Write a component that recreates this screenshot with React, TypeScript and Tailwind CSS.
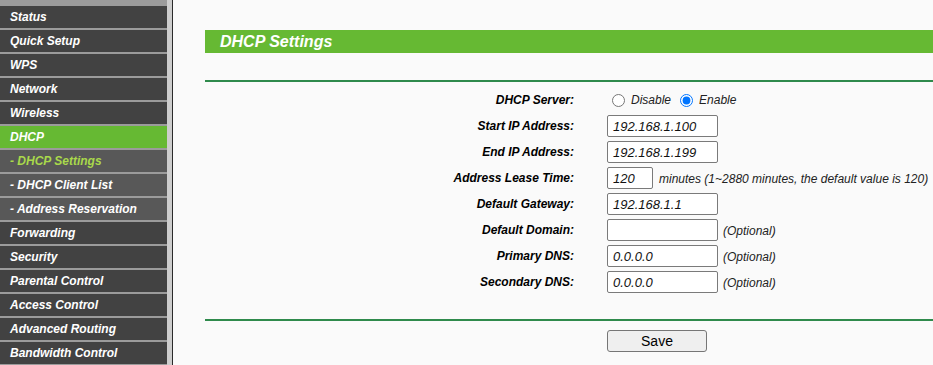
import React from "react"

const menu = [
  { label: "Status" },
  { label: "Quick Setup" },
  { label: "WPS" },
  { label: "Network" },
  { label: "Wireless" },
  { label: "DHCP", active: true },
  { label: "- DHCP Settings", sub: true, current: true },
  { label: "- DHCP Client List", sub: true },
  { label: "- Address Reservation", sub: true },
  { label: "Forwarding" },
  { label: "Security" },
  { label: "Parental Control" },
  { label: "Access Control" },
  { label: "Advanced Routing" },
  { label: "Bandwidth Control" },
]

const Field = ({ value, w = "w-[111px]" }: { value: string; w?: string }) => (
  <input
    readOnly
    value={value}
    className={`${w} h-[22px] border border-[#7a7a7a] rounded-[2px] bg-white px-[5px] text-[13px] italic text-[#111] outline-none`}
  />
)

const Row = ({ label, children }: { label: string; children: React.ReactNode }) => (
  <div className="flex h-[26px] items-center">
    <div className="w-[369px] text-right text-[12px] font-bold italic text-black">{label}</div>
    <div className="ml-[33px] flex items-center">{children}</div>
  </div>
)

const Note = ({ children }: { children: React.ReactNode }) => (
  <span className="text-[12px] italic text-[#222]">{children}</span>
)

export default function App() {
  return (
    <div className="flex h-[365px] overflow-hidden bg-[#fafafa] font-['Liberation_Sans',Arial,sans-serif]">
      {/* left menu */}
      <div className="flex h-full">
        <div className="flex w-[167px] flex-col gap-[2px] bg-[#9b9b9b] pt-[6px]">
          {menu.map((m) => (
            <div
              key={m.label}
              className={`flex h-[22px] shrink-0 items-center pl-[10px] text-[12px] font-bold italic ${
                m.active ? "bg-[#66b933]" : m.sub ? "bg-[#585858]" : "bg-[#424242]"
              } ${m.current ? "text-[#a9d94b]" : "text-white"}`}
            >
              {m.label}
            </div>
          ))}
        </div>
        <div className="w-[5px] bg-[#cdcdcd]" />
        <div className="w-px bg-[#2a2a2a]" />
      </div>

      {/* main content */}
      <div className="flex-1 pl-[32px] pt-[30px]">
        <div className="flex h-[23px] items-center bg-[#66b933] pl-[15px] text-[16px] font-bold italic text-white">
          DHCP Settings
        </div>
        <div className="mt-[27px] h-[2px] bg-[#2f8a4c]" />

        <div className="pt-[5px]">
          <Row label="DHCP Server:">
            <input type="radio" name="dhcp" readOnly className="m-0 ml-[5px] h-[13px] w-[13px]" />
            <span className="ml-[6px] text-[12px] italic text-[#222]">Disable</span>
            <input type="radio" name="dhcp" readOnly checked className="m-0 ml-[9px] h-[13px] w-[13px]" />
            <span className="ml-[6px] text-[12px] italic text-[#222]">Enable</span>
          </Row>
          <Row label="Start IP Address:">
            <Field value="192.168.1.100" />
          </Row>
          <Row label="End IP Address:">
            <Field value="192.168.1.199" />
          </Row>
          <Row label="Address Lease Time:">
            <Field value="120" w="w-[46px]" />
            <span className="ml-[6px]">
              <Note>minutes (1~2880 minutes, the default value is 120)</Note>
            </span>
          </Row>
          <Row label="Default Gateway:">
            <Field value="192.168.1.1" />
          </Row>
          <Row label="Default Domain:">
            <Field value="" />
            <span className="ml-[5px]">
              <Note>(Optional)</Note>
            </span>
          </Row>
          <Row label="Primary DNS:">
            <Field value="0.0.0.0" />
            <span className="ml-[5px]">
              <Note>(Optional)</Note>
            </span>
          </Row>
          <Row label="Secondary DNS:">
            <Field value="0.0.0.0" />
            <span className="ml-[5px]">
              <Note>(Optional)</Note>
            </span>
          </Row>
        </div>

        <div className="mt-[24px] h-[2px] bg-[#2f8a4c]" />
        <div className="mt-[8px] pl-[402px]">
          <button className="h-[22px] w-[100px] rounded-[3px] border border-[#767676] bg-[#efefef] text-[14px] text-black">
            Save
          </button>
        </div>
      </div>
    </div>
  )
}
